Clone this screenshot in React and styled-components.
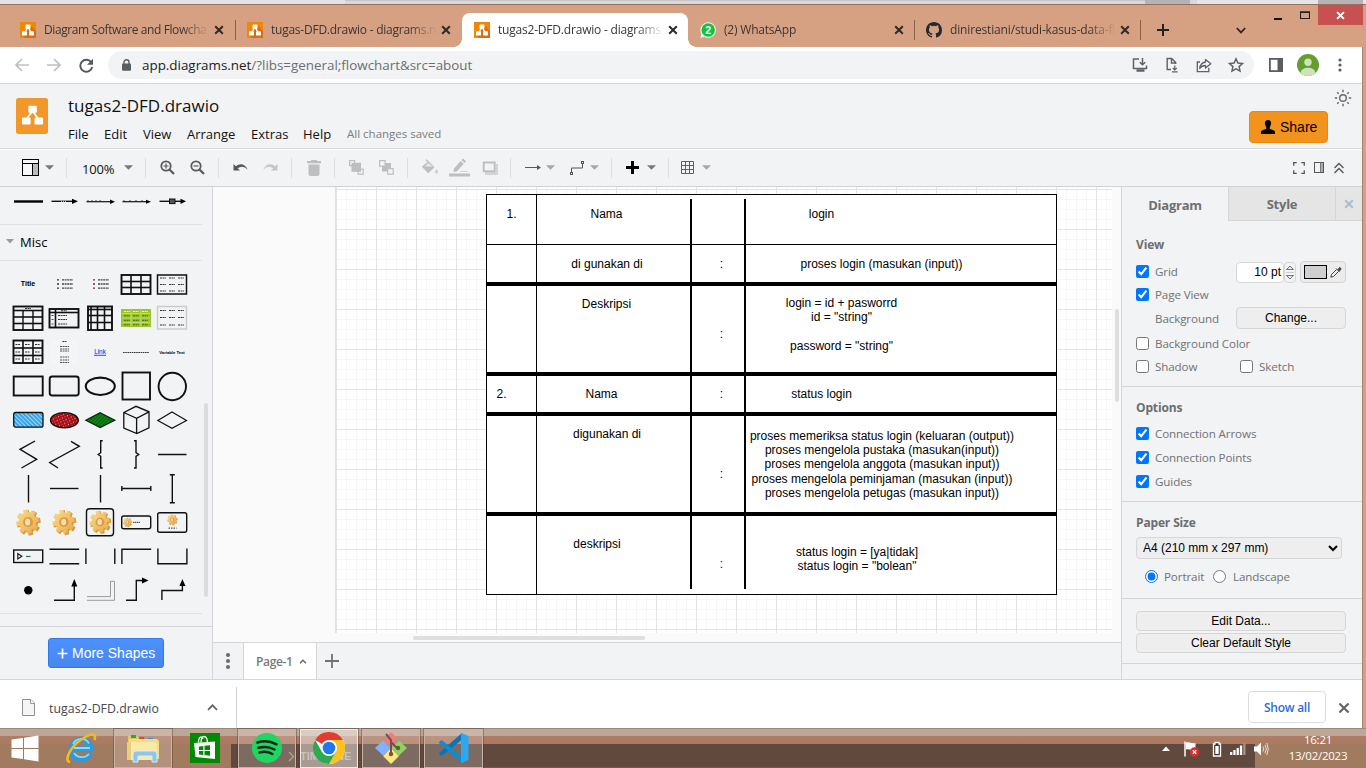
import React from 'react';
import styled, { createGlobalStyle, css } from 'styled-components';

const Global = createGlobalStyle`
  * { box-sizing: border-box; }
  body { margin: 0; overflow: hidden; font-family: "Open Sans", "Noto Sans", sans-serif; }
  svg { display: block; flex: none; }
`;

const Screen = styled.div`
  width: 1366px; height: 768px; display: flex; flex-direction: column;
  background: #d6a182; overflow: hidden;
`;
const Behind = styled.div`
  height: 5px; display: flex; background: #d7d7d9; border-bottom: 1px solid #94705d; flex: none;
`;
const BehindPart = styled.div`
  width: ${p => p.$w}px; background: ${p => p.$c}; border-top: ${p => (p.$line ? '1px solid #c6c6c8' : '0')};
`;

/* ---------- browser tabs ---------- */
const TabStrip = styled.div`
  height: 42px; flex: none; display: flex; padding: 8px 0 0 8px; background: #d6a182;
`;
const Tab = styled.div`
  width: ${p => p.$w}px; height: 34px; display: flex; align-items: center; padding-left: 12px;
  position: relative; color: #3c3533; border-radius: 8px 8px 0 0;
  ${p => p.$active && css`
    background: #fff;
    &::before, &::after {
      content: ''; position: absolute; bottom: 0; width: 8px; height: 8px;
    }
    &::before { left: -8px; background: radial-gradient(circle at 0 0, transparent 7.5px, #fff 8px); }
    &::after { right: -8px; background: radial-gradient(circle at 100% 0, transparent 7.5px, #fff 8px); }
  `}
`;
const TabTitle = styled.div`
  width: 166px; margin-left: 8px; margin-right: 4px; font-size: 12px; white-space: nowrap;
  letter-spacing: ${p => p.$ls}px; line-height: 18px;
  mask-image: linear-gradient(90deg, #000 138px, transparent 166px);
`;
const TabDivider = styled.div`
  width: 1px; height: 20px; margin: 7px -1px 0 0; background: #8a5f49;
`;
const StripIcon = styled.div`
  margin-left: ${p => p.$ml}px; height: 34px; display: flex; align-items: center;
`;
const WindowControls = styled.div`
  display: flex; margin-left: auto; margin-top: -8px; height: 20px; padding-right: 3px; align-items: center;
`;
const WinBtn = styled.div`
  width: ${p => p.$w}px; height: 20px; display: flex; align-items: center; justify-content: center;
  background: ${p => p.$bg || 'transparent'};
`;

/* ---------- window body ---------- */
const WindowBody = styled.div`
  height: 681px; flex: none; width: 1363px; border-right: 1px solid #ab8069; background: #fff;
  display: flex; flex-direction: column;
`;
const AddressRow = styled.div`
  height: 37px; flex: none; display: flex; align-items: center; padding-left: 13px;
  border-bottom: 1px solid #d4d6d9; background: #fff;
`;
const NavIcon = styled.div`
  width: 18px; margin-right: 14px; display: flex; justify-content: center;
`;
const Pill = styled.div`
  width: 1146px; height: 28px; border-radius: 14px; background: #f1f3f4; display: flex; align-items: center;
  padding: 0 9px 0 11px; margin-left: -1px;
`;
const Url = styled.div`
  margin-left: 11px; flex: 1; font-size: 13.4px; letter-spacing: 0; color: #6b6f73; line-height: 20px;
  b { font-weight: 400; color: #202124; }
`;
const PillIcons = styled.div`
  display: flex; gap: 14px;
`;
const RightNav = styled.div`
  display: flex; align-items: center; margin-left: 15px;
`;
const Gap = styled.div`
  width: ${p => p.$w}px; height: ${p => p.$h || 0}px; flex: none;
`;

/* ---------- app header ---------- */
const AppHeader = styled.div`
  height: 66px; flex: none; display: flex; background: #f1f3f4; border-bottom: 1px solid #fff;
  box-shadow: inset 0 -1px #d4d6d9; padding: 14px 18px 0 16px; align-items: flex-start;
`;
const Titles = styled.div`
  margin-left: 20px; flex: 1;
`;
const FileTitle = styled.div`
  font-size: 17px; line-height: 22px; margin-top: -3px; color: #111; letter-spacing: 0.03px;
`;
const Menu = styled.div`
  display: flex; margin-top: 7px; font-size: 13px; line-height: 20px; color: #111;
`;
const MenuItem = styled.div`
  width: ${p => p.$w}px; white-space: nowrap;
`;
const Saved = styled.div`
  color: #7b7e80; font-size: 11.5px; letter-spacing: 0; 
`;
const ShareButton = styled.div`
  width: 79px; height: 32px; margin-top: 13px; border: 1px solid #f08705; border-radius: 4px; background: #f2931e;
  display: flex; align-items: center; padding-left: 11px; font: 14px "Liberation Sans", Arial, sans-serif; color: #000;
  gap: 5px;
`;
const SunBox = styled.div`
  margin: -9px -8px 0 6px;
`;

/* ---------- toolbar ---------- */
const Toolbar = styled.div`
  height: 37px; flex: none; display: flex; align-items: center; background: #f1f3f4;
  border-bottom: 1px solid #d0d2d4; padding: 0 17px 1px 0;
`;
const Tool = styled.div`
  width: ${p => p.$w}px; margin-left: ${p => p.$ml}px; display: flex; justify-content: center; flex: none;
`;
const Sep = styled.div`
  width: 1px; height: 20px; background: #dcdee0; margin-left: ${p => p.$ml}px; flex: none;
`;
const Zoom = styled.div`
  margin-left: 15px; width: 34px; font-size: 13px; color: #111; letter-spacing: -0.2px; padding-top: 3px; line-height: 20px;
`;
const RightTools = styled.div`
  margin-left: auto; display: flex; gap: 9px; align-items: center;
`;

/* ---------- main ---------- */
const Main = styled.div`
  height: 493px; flex: none; display: flex; border-bottom: 1px solid #d4d6d9; background: #f1f3f4;
`;
const Sidebar = styled.div`
  width: 213px; border-right: 1px solid #d4d6d9; display: flex; flex-direction: column; flex: none;
`;
const Palette = styled.div`
  height: 440px; border-bottom: 1px solid #d4d6d9; display: flex; justify-content: space-between;
`;
const PaletteList = styled.div`
  width: 202px;
`;
const ShapeRow = styled.div`
  display: grid; grid-template-columns: repeat(5, 36px); grid-auto-rows: 34px; padding: ${p => p.$pad};
  border-bottom: 1px solid #dfe1e3;
`;
const SectionHead = styled.div`
  height: 36px; display: flex; align-items: center; border-bottom: 1px solid #dfe1e3; padding: 0 0 2px 6px; gap: 6px;
  font-size: 13px; color: #000;
`;
const SideScroll = styled.div`
  width: 4px; height: 194px; margin: 216px 4px 0 0; border-radius: 2px; background: #d9dbdd;
`;
const SideFooter = styled.div`
  flex: 1; padding: 11px 0 0 48px;
`;
const MoreShapes = styled.div`
  width: 116px; height: 30px; border: 1px solid #3079ed; border-radius: 3px;
  background: linear-gradient(#4d90fe, #4787ed); color: #fff; font: 14px "Liberation Sans", Arial, sans-serif;
  display: flex; align-items: center; padding-left: 8px; gap: 4px; white-space: nowrap;
`;

const Center = styled.div`
  width: 908px; display: flex; flex-direction: column; flex: none;
`;
const Canvas = styled.div`
  position: relative; height: 455px; background: #fafafa; flex: none; overflow: hidden;
`;
const Paper = styled.div`
  position: absolute; left: 122px; top: 0; width: 777px; height: 446px; border-left: 1px solid #e0e0e0;
  background-color: #fff;
  background-image:
    linear-gradient(90deg, #e4e4e4 1px, transparent 1px), linear-gradient(#e4e4e4 1px, transparent 1px),
    linear-gradient(90deg, #f6f6f6 1px, transparent 1px), linear-gradient(#f6f6f6 1px, transparent 1px);
  background-size: 40px 40px, 40px 40px, 10px 10px, 10px 10px;
  background-position: 40px 0, 0 2px, 10px 0, 0 2px;
`;
const Lines = styled.svg`
  position: absolute; left: 273px; top: 7px;
`;
const Label = styled.div`
  position: absolute; left: ${p => p.$x - 213}px; top: ${p => p.$y - 187}px; transform: translate(-50%, -50%);
  font: 12px/14.4px "Liberation Sans", Arial, sans-serif; color: #000; text-align: center; white-space: pre;
`;
const Thumb = styled.div`
  position: absolute; left: ${p => p.$x}px; top: ${p => p.$y}px; width: ${p => p.$w}px; height: ${p => p.$h}px;
  border-radius: 2px; background: #dedede;
`;
const PageTabs = styled.div`
  flex: 1; border-top: 1px solid #d4d6d9; display: flex; align-items: center; color: #707070;
`;
const PageMenu = styled.div`
  width: 31px; height: 100%; border-right: 1px solid #d4d6d9; display: flex; align-items: center; justify-content: center;
`;
const PageTab = styled.div`
  width: 73px; height: 100%; background: #fff; border-right: 1px solid #d4d6d9; display: flex; align-items: center;
  padding-left: 12px; gap: 6px; font-size: 12px; font-weight: 600; letter-spacing: -0.35px; color: #77797b;
`;
const AddPage = styled.div`
  margin-left: 8px;
`;

/* ---------- format panel ---------- */
const Panel = styled.div`
  flex: 1; border-left: 1px solid #d4d6d9; display: flex; flex-direction: column; font-size: 11.6px; color: #707274;
`;
const PanelTabs = styled.div`
  height: 34px; display: flex; flex: none; font-size: 13px; font-weight: 700; color: #707070;
`;
const PanelTab = styled.div`
  width: ${p => p.$w}px; display: flex; align-items: center; justify-content: center; letter-spacing: -0.25px;
  padding-top: ${p => (p.$off ? 0 : 2)}px;
  ${p => p.$off && css`background: #e5e5e5; border-left: 1px solid #d4d6d9; border-bottom: 1px solid #d4d6d9;`}
`;
const Section = styled.div`
  height: ${p => p.$h}px; flex: none; border-bottom: 1px solid #d4d6d9; padding: ${p => p.$pt}px 16px 0 14px;
`;
const Heading = styled.div`
  height: 20px; line-height: 20px; font-weight: 700; font-size: 12px; letter-spacing: -0.15px; color: #6c6e70;
`;
const Row = styled.div`
  height: ${p => p.$h || 24}px; display: flex; align-items: center; white-space: nowrap;
  input { width: 13px; height: 13px; margin: 0; flex: none; }
`;
const Option = styled.label`
  display: flex; align-items: center; gap: ${p => p.$gap || 6}px; line-height: 16px; letter-spacing: -0.1px;
  width: ${p => (p.$w ? p.$w + 'px' : 'auto')}; padding-left: ${p => p.$pl || 0}px;
  margin-top: -1px;
  span { padding-top: 1px; }
`;
const NumberBox = styled.div`
  width: 48px; height: 21px; border: 1px solid #d6d6d6; border-radius: 4px; background: #fff; color: #000;
  font: 12px/19px "Liberation Sans", Arial, sans-serif; text-align: right; padding-right: 2px;
`;
const Stepper = styled.div`
  width: 12px; height: 21px; border: 1px solid #d6d6d6; border-radius: 4px; display: flex; align-items: center;
  justify-content: center; margin-right: 4px;
`;
const ColorBtn = styled.div`
  width: 46px; height: 22px; border: 1px solid #d3d3d3; border-radius: 4px; background: #ececec; display: flex;
  align-items: center; padding-left: 3px; gap: 3px;
`;
const Swatch = styled.div`
  width: 23px; height: 14px; border: 1px solid #000; background: #cfcfcf;
`;
const PanelButton = styled.div`
  height: ${p => p.$h}px; width: ${p => p.$w}px; border: 1px solid #d6d6d6; border-radius: 4px; background: #eee;
  color: #000; font: 12px "Liberation Sans", Arial, sans-serif; display: flex; align-items: center;
  justify-content: center; margin-bottom: 2px;
`;
const PaperSelect = styled.select`
  display: block; width: 206px; height: 22px; margin-top: 4px; border: 1px solid #d6d6d6; border-radius: 4px;
  background: #eee; color: #000; font: 12px "Liberation Sans", Arial, sans-serif; padding: 0 0 0 2px;
`;

/* ---------- downloads ---------- */
const Downloads = styled.div`
  height: 48px; flex: none; display: flex; align-items: center; background: #fff; padding: 7px 12px 0 22px;
`;
const FileName = styled.div`
  font-size: 12.3px; color: #45484b; width: 158px; margin-left: 14px; letter-spacing: 0.05px; padding-top: 1px;
`;
const DownloadDivider = styled.div`
  width: 1px; height: 42px; background: #d0d0d0; margin-left: 18px;
`;
const ShowAll = styled.div`
  margin-left: auto; margin-right: 12px; margin-top: -1px; width: 78px; height: 32px; border: 1px solid #dadce0; border-radius: 4px;
  display: flex; align-items: center; justify-content: center; font-size: 12px; font-weight: 600; color: #2b6ddd;
  letter-spacing: -0.25px;
`;

/* ---------- taskbar ---------- */
const Taskbar = styled.div`
  height: 40px; flex: none; display: flex; align-items: center; position: relative;
  background:
    linear-gradient(#9b8778 1px, transparent 1px),
    linear-gradient(transparent 39px, #4a667e 39px) 231px 0 / 1024px 40px no-repeat,
    linear-gradient(transparent 16px, #614a3d 16px) 231px 0 / 1024px 40px no-repeat,
    linear-gradient(#bba796 8px, #b07c64 8px, #a97a61 16px, #a17b60 16px);
`;
const BehindText = styled.div`
  position: absolute; left: 288px; top: 17px; font: bold 11px/22px "Liberation Sans", Arial, sans-serif; color: #a49081;
  display: flex; gap: 2px; align-items: center;
`;
const TaskItem = styled.div`
  width: ${p => p.$w}px; height: 39px; margin-left: ${p => p.$ml}px; display: flex; align-items: center;
  justify-content: center; position: relative;
  ${p => p.$open && css`border: 1px solid #c8b5a9; background: rgba(255,255,255,.18); box-shadow: 0 0 0 1px rgba(70,45,35,.35);`}
  ${p => p.$current && css`border-color: #f0e9e4; background: rgba(255,255,255,.45);`}
`;
const Tray = styled.div`
  margin-left: auto; display: flex; align-items: center; padding-top: 2px;
`;
const Clock = styled.div`
  width: 62px; margin: -2px 17px 0 18px; text-align: center; font-size: 11.5px; line-height: 16px; color: #fff;
  letter-spacing: -0.25px; white-space: nowrap;
`;

const DrawioMark = ({ w, h }) => (
  <svg width={w} height={h} viewBox={w === 16 ? '0 0 16 16' : '0 0 32 36'}>
    {w === 16 ? (
      <>
        <rect width="16" height="16" fill="#f08705" />
        <path d="M10 3l6 6v7H5l-2-3z" fill="#df6c0c" />
        <path d="M8 5L4.5 11M8 5l3.5 6" stroke="#fff" strokeWidth="1.4" />
        <rect x="5.5" y="2.4" width="5" height="4.3" rx=".7" fill="#fff" />
        <rect x="2" y="9.3" width="5" height="4.3" rx=".7" fill="#fff" />
        <rect x="9" y="9.3" width="5" height="4.3" rx=".7" fill="#fff" />
      </>
    ) : (
      <>
        <rect width="32" height="36" rx="2.5" fill="#f2982a" />
        <path d="M16.5 13L10.5 21M16.5 13l6 8" stroke="#fff" strokeWidth="1.7" />
        <rect x="12.3" y="7.7" width="8.6" height="7" rx="1.3" fill="#fff" />
        <rect x="6" y="19.6" width="8.6" height="7" rx="1.3" fill="#fff" />
        <rect x="18.5" y="19.6" width="8.6" height="7" rx="1.3" fill="#fff" />
      </>
    )}
  </svg>
);
const Close = ({ s = 10, c = '#2c2a2a', sw = 2 }) => (
  <svg width={s} height={s} viewBox="0 0 10 10"><path d="M1.2 1.2l7.6 7.6M8.8 1.2L1.2 8.8" stroke={c} strokeWidth={sw} /></svg>
);
const WhatsApp = () => (
  <svg width="16" height="16" viewBox="0 0 16 16">
    <path d="M.3 15.8l1-3.9A7.8 7.8 0 1 1 4.500 15z" fill="#e8f5e4" />
    <circle cx="8.200" cy="8" r="6.700" fill="#12c143" />
    <text x="8.200" y="11.700" fontSize="10.500" fontWeight="700" fill="#fff" textAnchor="middle" fontFamily="Liberation Sans">2</text>
  </svg>
);
const GitHub = () => (
  <svg width="16" height="16" viewBox="0 0 16 16" fill="#24292f">
    <path d="M8 0C3.58 0 0 3.58 0 8c0 3.54 2.29 6.53 5.47 7.59.4.07.55-.17.55-.38 0-.19-.01-.82-.01-1.49-2.01.37-2.53-.49-2.69-.94-.09-.23-.48-.94-.82-1.13-.28-.15-.68-.52-.01-.53.63-.01 1.08.58 1.23.82.72 1.21 1.87.87 2.33.66.07-.52.28-.87.51-1.07-1.78-.2-3.64-.89-3.64-3.95 0-.87.31-1.59.82-2.15-.08-.2-.36-1.02.08-2.12 0 0 .67-.21 2.2.82a7.6 7.6 0 0 1 4 0c1.53-1.04 2.2-.82 2.2-.82.44 1.1.16 1.92.08 2.12.51.56.82 1.27.82 2.15 0 3.07-1.87 3.75-3.65 3.95.29.25.54.73.54 1.48 0 1.07-.01 1.93-.01 2.2 0 .21.15.46.55.38A8 8 0 0 0 16 8c0-4.42-3.58-8-8-8z" />
  </svg>
);
const Caret = ({ c = '#8b8d8f' }) => (
  <svg width="9" height="5" viewBox="0 0 9 5"><path d="M0 .3h9L4.5 4.8z" fill={c} /></svg>
);
const Dots = ({ c, r = 1.6, step = 5 }) => (
  <svg width="6" height="18" viewBox="0 0 6 18" fill={c}>
    <circle cx="3" cy={9 - step} r={r} /><circle cx="3" cy="9" r={r} /><circle cx="3" cy={9 + step} r={r} />
  </svg>
);

const TABS = [
  { w: 227, t: 'Diagram Software and Flowcha', icon: 'd', ls: -0.4 },
  { w: 227, t: 'tugas-DFD.drawio - diagrams.n', icon: 'd', div: true, ls: -0.24 },
  { w: 226, t: 'tugas2-DFD.drawio - diagrams', icon: 'd', active: true, ls: -0.2 },
  { w: 226, t: '(2) WhatsApp', icon: 'w', ls: -0.2 },
  { w: 226, t: 'dinirestiani/studi-kasus-data-fl', icon: 'g', div: true, ls: -0.15 },
];

/* ---------- palette thumbnails, each drawn in a 36 x 34 cell ---------- */
const gearPath = (cx, cy, R) => {
  const pts = [];
  const teeth = 8;
  for (let i = 0; i < teeth; i++) {
    const a = (i / teeth) * Math.PI * 2 - 0.2;
    [[-0.27, 0.76], [-0.19, 1], [0.19, 1], [0.27, 0.76]].forEach(([d, k]) => {
      pts.push(`${(cx + Math.cos(a + d) * R * k * 0.93).toFixed(2)} ${(cy + Math.sin(a + d) * R * k).toFixed(2)}`);
    });
  }
  return `M${pts.join('L')}Z`;
};
const Gear = ({ x = 18, y = 17, r = 13 }) => (
  <g>
    <path d={gearPath(x + r * 0.06, y + r * 0.05, r)} fill="#d9983c" />
    <path d={gearPath(x - r * 0.04, y - r * 0.03, r * 0.95)} fill="url(#gold)" />
    <circle cx={x} cy={y} r={r * 0.38} fill="#dc9a44" />
    <ellipse cx={x - r * 0.03} cy={y} rx={r * 0.2} ry={r * 0.26} fill="#f3dfae" />
  </g>
);
const Frame = ({ x, y, w, h, cols = [], rows = [], c = '#111', sw = 1.9 }) => (
  <g stroke={c} strokeWidth={sw} fill="none">
    <rect x={x} y={y} width={w} height={h} />
    {cols.map(v => <path key={'c' + v} strokeWidth={sw - 0.3} d={`M${v} ${y}V${y + h}`} />)}
    {rows.map(v => <path key={'r' + v} strokeWidth={sw - 0.3} d={`M${x} ${v}H${x + w}`} />)}
  </g>
);
const Dashes = ({ xs, ys, w = 6, c = '#333', sw = 1 }) => (
  <g stroke={c} strokeWidth={sw} strokeDasharray="2 .6">
    {ys.flatMap(y => xs.map(x => <path key={x + '-' + y} d={`M${x} ${y}h${w}`} />))}
  </g>
);
const S = { stroke: '#111', strokeWidth: 1.4, fill: 'none' };
const SHAPES = [
  <text x="18" y="19.4" fontSize="7" fontWeight="700" textAnchor="middle" fontFamily="Liberation Sans">Title</text>,
  <g><Dashes xs={[11]} ys={[12.8, 17, 21.2]} w={2} sw={1.3} c="#333" /><Dashes xs={[16]} ys={[12.8, 17, 21.2]} w={11} sw={1.3} c="#444" /></g>,
  <g><Dashes xs={[11]} ys={[12.8, 17, 21.2]} w={2} sw={1.3} c="#723" /><Dashes xs={[16]} ys={[12.8, 17, 21.2]} w={11} sw={1.3} c="#444" /></g>,
  <Frame x={3.5} y={8} w={29} h={19} cols={[13, 23]} rows={[14.5, 20.5]} />,
  <g><Frame x={3.5} y={8} w={29} h={19} sw={1.5} /><Dashes xs={[6, 15, 24]} ys={[11, 17.5, 24]} /></g>,
  <g><Frame x={3.5} y={5.5} w={29} h={23.5} rows={[9.5, 16, 22.5]} /><path d="M13 9.5V29M23 9.5V29" {...S} /><Dashes xs={[15]} ys={[7.5]} /></g>,
  <g><Frame x={3.5} y={8} w={29} h={18.500} rows={[11.5]} cols={[9.5]} /><Dashes xs={[15]} ys={[9.800]} w={6} /><Dashes xs={[12]} ys={[14.5, 18.5, 23]} w={9} sw={1.200} /><Dashes xs={[5.5]} ys={[14.5, 18.5, 23]} w={2} c="#733" /></g>,
  <g><Frame x={6} y={5.5} w={24} h={23.5} rows={[8.5, 14.5, 21.5]} cols={[9, 15.5, 22.5]} /></g>,
  <g><rect x="3" y="8" width="30" height="18" fill="#9bc52b" /><path d="M4 12.5h28M4 17h28M4 21.5h28M13 9v16M23 9v16" stroke="#c5e07c" strokeWidth=".8" /><Dashes xs={[6, 15, 24]} ys={[14.8, 19.3, 23.8]} c="#4c6610" /><Dashes xs={[6, 15, 24]} ys={[10.5]} c="#e9f5c8" /></g>,
  <g><Frame x={3.5} y={5.5} w={29} h={22.5} c="#c9cbcd" sw={1.5} /><Dashes xs={[6, 15, 24]} ys={[9.5, 16.5, 24]} /></g>,
  <g><Frame x={3.5} y={5.5} w={29} h={22.5} cols={[13, 23]} rows={[13, 20.5]} /><Dashes xs={[5.5, 15, 25]} ys={[9.5, 17, 24]} w={5} /></g>,
  <g><rect x="4.5" y="5" width="27" height="24" fill="#f3f5f6" /><Dashes xs={[16.5]} ys={[6.5]} w={4} /><Dashes xs={[14]} ys={[11.5, 14, 16, 22, 25, 27.5]} w={9} c="#555" /></g>,
  <g><text x="18" y="19" fontSize="6.4" textAnchor="middle" fontFamily="Liberation Sans" fill="#1212ee">Link</text><path d="M12 20.3h12" stroke="#1212ee" strokeWidth=".8" /></g>,
  <path d="M5 17.5h26" stroke="#333" strokeWidth="1" strokeDasharray="1.6 .6" />,
  <text x="18" y="18.600" fontSize="4.200" fontWeight="700" textAnchor="middle" fontFamily="Liberation Sans">Variable Text</text>,
  <rect x="3.7" y="7.5" width="29" height="19" {...S} strokeWidth="1.9" />,
  <rect x="3.7" y="7.5" width="29" height="19" rx="2.5" {...S} strokeWidth="1.9" />,
  <ellipse cx="18.3" cy="17.3" rx="14.5" ry="8.7" {...S} strokeWidth="2.1" />,
  <rect x="4.500" y="3.500" width="27.500" height="27" {...S} strokeWidth="1.900" />,
  <circle cx="18.3" cy="17.5" r="13.7" {...S} strokeWidth="1.900" />,
  <rect x="3.7" y="9.5" width="29.3" height="14.7" rx="2" fill="url(#hatchB)" stroke="#111" strokeWidth="1.3" />,
  <ellipse cx="18.4" cy="17.2" rx="13.9" ry="7.6" fill="url(#speck)" stroke="#111" strokeWidth="1.3" />,
  <path d="M18.2 9.8L32.8 17.3 18.2 24.6 3.8 17.3z" fill="url(#hatchG)" stroke="#0c1d0c" strokeWidth="1.2" />,
  <path d="M5.8 9.5L18 3.3l13 5.5v16L18.8 30.5 5.8 25zM5.8 9.5l12.8 5.8L31 8.8M18.6 15.3v15" {...S} strokeWidth="1.3" />,
  <path d="M18 9l14.5 8.5L18 25.3 3.8 17.5z" {...S} strokeWidth="1.2" />,
  <path d="M25 4L10 12.3 26.7 22.3 11.5 31" {...S} />,
  <path d="M25 4.3L33.3 9.3 3.7 25.5 12 31" {...S} />,
  <path d="M20.7 3.7h-2v12l-2.5 1.8 2.5 1.8v11.7h2" {...S} />,
  <path d="M16 3.7h2v12l2.7 1.8-2.7 1.8v11.7h-2" {...S} />,
  <path d="M4 17.5h28.5" {...S} strokeWidth="1.5" />,
  <path d="M18.5 4v27.5" {...S} />,
  <path d="M4 17.5h28.5" {...S} />,
  <path d="M18.5 4v27.5" {...S} />,
  <path d="M3.8 17.5h29M3.8 15v5M32.8 15v5" {...S} />,
  <path d="M18.3 3.7v28M15.8 3.7h5M15.8 31.7h5" {...S} />,
  <Gear />,
  <Gear r={12.6} />,
  <g><rect x="4.5" y="3.7" width="27" height="27" rx="3" {...S} /><Gear r={11.5} /></g>,
  <g><rect x="3.7" y="11" width="29" height="12.8" rx="2" {...S} /><Gear x={9.5} y={17.3} r={4.8} /><path d="M15 17.3h7" stroke="#555" strokeWidth="1.2" strokeDasharray="1.5 .5" /></g>,
  <g><rect x="3.7" y="7.7" width="29" height="19.5" rx="2" {...S} /><Gear x={18.3} y={14.7} r={5.5} /><path d="M14.5 23.2h8" stroke="#456" strokeWidth="1.3" strokeDasharray="1.5 1" /></g>,
  <g><rect x="3.7" y="11" width="29" height="12.5" {...S} /><path d="M7.8 14.5v5.5l4-2.7z" {...S} strokeWidth="1.1" /><path d="M16 17.5h4.5" stroke="#465" strokeWidth="1.2" /></g>,
  <path d="M3.5 10.3h29.7M3.5 24.7h29.7" {...S} />,
  <path d="M3.9 9.5v15.5M32.8 9.5v15.5" {...S} />,
  <path d="M3.9 25V10.2h29.3" {...S} />,
  <path d="M3.9 9.5v15.2h29V9.5" {...S} />,
  <circle cx="18.3" cy="17.2" r="4.2" fill="#000" />,
  <g><path d="M8 27.3h20.3V10" {...S} /><path d="M28.3 6l3 7.5h-6z" fill="#000" /></g>,
  <path d="M5 23.6h23.5V8.3h4v19H5" stroke="#8f9193" strokeWidth=".9" fill="none" />,
  <g><path d="M8 27.3h10.3V7.5h8" {...S} /><path d="M30.500 7.500l-6.500-3v6z" fill="#000" /></g>,
  <g><path d="M7.9 27V17.5h20.5V11" {...S} /><path d="M28.400 6l3 7h-6z" fill="#000" /></g>,
];
const TOP_LINES = [
  <path d="M4 17.5h29" stroke="#000" strokeWidth="2.4" />,
  <g><path d="M5.5 17.3h22" {...S} /><path d="M32 17.3l-6-2.6v5.2z" /><path d="M15 17.3h5" stroke="#cfd8d8" strokeWidth="1" strokeDasharray="1 1" /></g>,
  <g><path d="M4.5 17.7h24" {...S} strokeWidth="1.2" /><path d="M33 17.7l-5-2.2v4.4z" /><path d="M5 16.5h14" stroke="#999" strokeWidth="1" strokeDasharray="2 2" /></g>,
  <g><path d="M4.5 17.7h24" {...S} strokeWidth="1.2" /><path d="M33 17.7l-5-2v4z" /><path d="M5 16.5h22" stroke="#999" strokeWidth="1" strokeDasharray="2 4" /></g>,
  <g><path d="M5.5 17.3h22" {...S} /><path d="M32 17.3l-5.5-2.6v5.2z" /><rect x="15.5" y="15" width="5.5" height="4.6" fill="#555" stroke="#111" /></g>,
];
const Cell = ({ children }) => <svg width="36" height="34" viewBox="0 0 36 34">{children}</svg>;

const LABELS = [
  [511.5, 214, '1.'], [606.5, 214, 'Nama'], [821.5, 214, 'login'],
  [607, 264, 'di gunakan di'], [721.5, 264, ':'], [881.5, 264, 'proses login (masukan (input))'],
  [606.5, 304, 'Deskripsi'], [721.5, 334, ':'], [841.5, 324.5, 'login = id + pasworrd\nid = "string"\n\npassword = "string"'],
  [501.5, 394, '2.'], [601.5, 394, 'Nama'], [721.5, 394, ':'], [821.5, 394, 'status login'],
  [607, 434, 'digunakan di'], [721.5, 474, ':'],
  [882, 464.5, 'proses memeriksa status login (keluaran (output))\nproses mengelola pustaka (masukan(input))\nproses mengelola anggota (masukan input))\nproses mengelola peminjaman (masukan (input))\nproses mengelola petugas (masukan input))'],
  [597, 544, 'deskripsi'], [721.5, 564, ':'], [857, 559, 'status login = [ya|tidak]\nstatus login = "bolean"'],
];
const MENU = [['File', 36], ['Edit', 39], ['View', 44], ['Arrange', 64], ['Extras', 52], ['Help', 44]];

export default function App() {
  return (
    <Screen>
      <Global />
      <Behind>
        <BehindPart $w={345} $c="#e3e3e5" />
        <BehindPart $w={800} $c="#d9d9db" $line />
        <BehindPart $w={45} $c="#b5b3b4" />
        <BehindPart $w={7} $c="#d9d9db" />
        <BehindPart $w={121} $c="#e6e6e8" />
        <BehindPart $w={45} $c="#b5b3b4" />
        <BehindPart $w={3} $c="#e6e6e8" />
      </Behind>

      <TabStrip>
        {TABS.map(t => (
          <React.Fragment key={t.t}>
            {t.div && <TabDivider />}
            <Tab $w={t.w} $active={t.active}>
              {t.icon === 'd' && <DrawioMark w={16} h={16} />}
              {t.icon === 'w' && <WhatsApp />}
              {t.icon === 'g' && <GitHub />}
              <TabTitle $ls={t.ls}>{t.t}</TabTitle>
              <Close />
            </Tab>
          </React.Fragment>
        ))}
        <TabDivider />
        <StripIcon $ml={17}><svg width="12" height="12" viewBox="0 0 12 12"><path d="M6 0v12M0 6h12" stroke="#222" strokeWidth="2" /></svg></StripIcon>
        <StripIcon $ml={67}><svg width="10" height="7" viewBox="0 0 10 7"><path d="M.8 1L5 5.4 9.2 1" stroke="#2b2523" strokeWidth="1.8" fill="none" /></svg></StripIcon>
        <WindowControls>
          <WinBtn $w={27}><svg width="8" height="12" viewBox="0 0 8 12"><path d="M0 10h8" stroke="#111" strokeWidth="2" /></svg></WinBtn>
          <WinBtn $w={27}><svg width="10" height="8" viewBox="0 0 10 8"><path d="M.5 1.5h9v6h-9zM0 .9h10" stroke="#222" fill="none" strokeWidth="1.2" /></svg></WinBtn>
          <WinBtn $w={45} $bg="#c75050"><Close s={9} c="#fff" sw={2.2} /></WinBtn>
        </WindowControls>
      </TabStrip>

      <WindowBody>
        <AddressRow>
          <NavIcon><svg width="14" height="14" viewBox="0 0 14 14"><path d="M14 7H1.5M7 1L1 7l6 6" stroke="#bdc0c3" strokeWidth="1.7" fill="none" /></svg></NavIcon>
          <NavIcon><svg width="14" height="14" viewBox="0 0 14 14"><path d="M0 7h12.5M7 1l6 6-6 6" stroke="#bdc0c3" strokeWidth="1.7" fill="none" /></svg></NavIcon>
          <NavIcon><svg width="15" height="15" viewBox="0 0 15 15"><path d="M12.2 4.2A6 6 0 1 0 13.2 9" stroke="#54585c" strokeWidth="1.9" fill="none" /><path d="M14 .7v6H8z" fill="#54585c" /></svg></NavIcon>
          <Pill>
            <Gap $w={3} />
            <svg width="9" height="12" viewBox="0 0 9 12"><rect y="4.5" width="9" height="7.3" rx="1" fill="#5a5e62" /><path d="M2 5V3.2a2.5 2.5 0 0 1 5 0V5" stroke="#5a5e62" strokeWidth="1.4" fill="none" /></svg>
            <Url><b>app.diagrams.net</b>/?libs=general;flowchart&amp;src=about</Url>
            <PillIcons>
              <svg width="18" height="18" viewBox="0 0 18 18" fill="none" stroke="#5f6368" strokeWidth="1.5"><path d="M8 3H2.5v9.5h13v-3M11.5 2v6.5M8.8 6.2l2.7 2.6 2.7-2.6" /><path d="M5.5 14.5h8" strokeWidth="2.5" /></svg>
              <svg width="18" height="18" viewBox="0 0 18 18" fill="none" stroke="#5f6368" strokeWidth="1.4"><path d="M8 13.500H4.200v-11h4.500l4 4V8M8.500 2.500V7H13" /><path d="M11.800 9.500v4.500M9.800 12l2 2 2-2M9 15.800h5.600" strokeWidth="1.200" /></svg>
              <svg width="18" height="18" viewBox="0 0 18 18" fill="none" stroke="#5f6368" strokeWidth="1.3"><path d="M5 6H2.3v9.7h11.5v-4" /><path d="M10.500 3.500l5.300 4.300-5.300 4.200V9.500C7.500 9.500 6 10.500 4.700 12.500c.5-4 2.500-6 5.800-6.500z" strokeLinejoin="round" /></svg>
              <svg width="18" height="18" viewBox="0 0 18 18" fill="none" stroke="#5f6368" strokeWidth="1.5"><path d="M9 2.800l1.900 4.200 4.600.5-3.400 3.100.9 4.500L9 12.800l-4 2.300.9-4.500L2.500 7.500 7.100 7z" /></svg>
            </PillIcons>
          </Pill>
          <RightNav>
            <svg width="14" height="14" viewBox="0 0 14 14"><rect x=".9" y=".9" width="12.2" height="12.2" fill="none" stroke="#5a5e63" strokeWidth="1.8" /><rect x="8.5" y="1" width="4.5" height="12" fill="#5a5e63" /></svg>
            <Gap $w={14} />
            <svg width="22" height="22" viewBox="0 0 22 22"><defs><clipPath id="av"><circle cx="11" cy="11" r="11" /></clipPath></defs><g clipPath="url(#av)"><rect width="22" height="22" fill="#639f2f" /><circle cx="11" cy="8.3" r="3.7" fill="#cfe2bd" /><ellipse cx="11" cy="18.5" rx="7.3" ry="4.7" fill="#cfe2bd" /></g></svg>
            <Gap $w={18} />
            <Dots c="#5a5e63" />
          </RightNav>
        </AddressRow>

        <AppHeader>
          <DrawioMark w={32} h={36} />
          <Titles>
            <FileTitle>tugas2-DFD.drawio</FileTitle>
            <Menu>
              {MENU.map(([t, w]) => <MenuItem key={t} $w={w}>{t}</MenuItem>)}
              <Saved>All changes saved</Saved>
            </Menu>
          </Titles>
          <ShareButton>
            <svg width="14" height="14" viewBox="0 0 14 14"><path d="M7 0c2.3 0 3.3 1.7 3 3.8-.2 1.7-.8 2.7-1.3 3.4v1.6l4.3 1.7c.8.4 1 1 1 2V14H0v-1.500c0-1 .2-1.600 1-2l4.300-1.700V7.200C4.800 6.500 4.200 5.500 4 3.800 3.700 1.700 4.700 0 7 0z" /></svg>
            Share
          </ShareButton>
          <SunBox>
            <svg width="18" height="18" viewBox="0 0 18 18" fill="none" stroke="#65696c" strokeWidth="1.4"><circle cx="9" cy="9" r="3.3" /><path d="M9 .8v2.400M9 14.800v2.400M.8 9h2.400M14.800 9h2.400M3.200 3.200l1.500 1.500M13.300 13.300l1.500 1.500M14.800 3.200l-1.500 1.500M4.700 13.300l-1.500 1.500" /></svg>
          </SunBox>
        </AppHeader>

        <Toolbar>
          <Tool $ml={22} $w={17}><svg width="17" height="17" viewBox="0 0 17 17"><rect x=".5" y=".5" width="16" height="16" fill="#f6f7f8" stroke="#000" /><rect x="11" y="5" width="5" height="11" fill="#bbb" /><path d="M.5 4.5h16M10.5 4.5v12" stroke="#000" /></svg></Tool>
          <Tool $ml={6} $w={9}><Caret c="#77797b" /></Tool>
          <Sep $ml={12} />
          <Zoom>100%</Zoom>
          <Tool $ml={8} $w={9}><Caret c="#77797b" /></Tool>
          <Sep $ml={12} />
          {['M6.5 4v5M4 6.5h5', 'M4 6.5h5'].map(d => (
            <Tool key={d} $ml={12} $w={18}><svg width="15" height="15" viewBox="0 0 15 15" fill="none" stroke="#595c5f"><circle cx="6" cy="6" r="4.7" strokeWidth="1.8" /><path d="M9.500 9.500l4.500 4.500" strokeWidth="2.3" /><path d={d} transform="translate(-.5 -.5)" strokeWidth="1.2" /></svg></Tool>
          ))}
          <Sep $ml={12} />
          <Tool $ml={13} $w={18}><svg width="16" height="9" viewBox="0 0 16 9"><path d="M.5 1v6.500H7L4.700 5.200C8 2.800 11.500 3 14.800 7 12.500.5 6.500-.3 2.900 3.300z" fill="#55585b" /></svg></Tool>
          <Tool $ml={11} $w={18}><svg width="16" height="9" viewBox="0 0 16 9"><path d="M15.5 1v6.500H9l2.300-2.300C8 2.800 4.500 3 1.200 7 3.500.5 9.500-.3 13.100 3.300z" fill="#c3c5c7" /></svg></Tool>
          <Sep $ml={12} />
          <Tool $ml={13} $w={18}><svg width="14" height="16" viewBox="0 0 14 16" fill="#bcbec0"><path d="M0 1h4V0h6v1h4v2.200H0zM1.500 4.500h11V14a2 2 0 0 1-2 2h-7a2 2 0 0 1-2-2z" /></svg></Tool>
          <Sep $ml={11} />
          <Tool $ml={12} $w={18}><svg width="15" height="15" viewBox="0 0 15 15" fill="none" stroke="#bcbec0" strokeWidth="1.2"><rect x=".6" y=".6" width="5" height="5" /><rect x="9.2" y="9.2" width="5" height="5" fill="#f1f3f4" /><rect x="2.5" y="2.8" width="9.5" height="9" fill="#bcbec0" stroke="none" /></svg></Tool>
          <Tool $ml={12} $w={18}><svg width="15" height="15" viewBox="0 0 15 15" fill="none" stroke="#bcbec0" strokeWidth="1.2"><rect x="3" y="3" width="9" height="8.5" fill="#bcbec0" stroke="none" /><rect x=".6" y=".6" width="5.5" height="5.5" fill="#f1f3f4" /><rect x="8.7" y="8.7" width="5.5" height="5.5" fill="#f1f3f4" /></svg></Tool>
          <Sep $ml={12} />
          <Tool $ml={13} $w={18}><svg width="18" height="17" viewBox="0 0 18 17"><path d="M4.5 1l1-.8 8 8-6.300 6L.8 7.800 6.500 3z" fill="#bcbec0" /><path d="M4 7.500h7.500L7.200 4z" fill="#e9ebec" /><path d="M15.500 10c2 2.800 1.700 4.300 0 4.300s-2-1.500 0-4.300z" fill="#c9cbcd" /></svg></Tool>
          <Tool $ml={9} $w={22}><svg width="21" height="19" viewBox="0 0 21 19"><path d="M5 10.500L11.700 3l3 2.800-6.700 7.500-3.600.7zM12.500 2L14 .6l3 2.700L15.500 5z" fill="#bcbec0" /><path d="M11 13.500h8" stroke="#d3d5d7" /><rect x="0" y="15.5" width="21" height="3" fill="#bcbec0" /></svg></Tool>
          <Tool $ml={11} $w={18}><svg width="16" height="14" viewBox="0 0 16 14"><path d="M3 11h11V3h2v11H3z" fill="#d3d5d7" /><rect x="1.700" y="1.500" width="11" height="8.800" fill="#f1f3f4" stroke="#bcbec0" strokeWidth="1.900" /></svg></Tool>
          <Sep $ml={11} />
          <Tool $ml={13} $w={18}><svg width="16" height="6" viewBox="0 0 16 6"><path d="M0 2.500h13" stroke="#55585b" /><path d="M16 2.500l-4-2.500v5z" fill="#55585b" /></svg></Tool>
          <Tool $ml={4} $w={9}><Caret c="#a5a7a9" /></Tool>
          <Tool $ml={13} $w={18}><svg width="16" height="16" viewBox="0 0 16 16" fill="none" stroke="#55585b"><path d="M2.500 12.500v-4.500h11V3.500" /><rect x="1.500" y="12.500" width="2" height="2" /><rect x="12.500" y="1.500" width="2" height="2" /></svg></Tool>
          <Tool $ml={4} $w={9}><Caret c="#a5a7a9" /></Tool>
          <Sep $ml={12} />
          <Tool $ml={13} $w={14}><svg width="13" height="13" viewBox="0 0 13 13"><path d="M6.500 0v13M0 6.500h13" stroke="#000" strokeWidth="3" /></svg></Tool>
          <Tool $ml={8} $w={9}><Caret c="#77797b" /></Tool>
          <Sep $ml={12} />
          <Tool $ml={11} $w={14}><svg width="13" height="13" viewBox="0 0 13 13"><path d="M.5.5h12v12H.5zM.5 4.500h12M.5 8.500h12M4.500.5v12M8.500.5v12" stroke="#5e6164" fill="none" /></svg></Tool>
          <Tool $ml={8} $w={9}><Caret c="#a5a7a9" /></Tool>
          <RightTools>
            <svg width="12" height="12" viewBox="0 0 12 12"><path d="M.7 3.700V.7h3M8.300.7h3v3M11.300 8.300v3h-3M3.700 11.300h-3v-3" stroke="#55585b" strokeWidth="1.300" fill="none" /></svg>
            <svg width="10" height="11" viewBox="0 0 10 11"><rect x=".5" y=".5" width="9" height="10" fill="#f1f3f4" stroke="#55585b" /><rect x="6.500" y="1" width="2.500" height="9" fill="#aaa" /><path d="M6.500.5v10" stroke="#77797b" /></svg>
            <svg width="12" height="12" viewBox="0 0 12 12"><path d="M1.500 6L6 1.500 10.500 6M1.500 11L6 6.500l4.500 4.500" stroke="#55585b" strokeWidth="1.400" fill="none" /></svg>
          </RightTools>
        </Toolbar>

        <Main>
          <Sidebar>
            <Palette>
              <PaletteList>
                <svg width="0" height="0">
                  <defs>
                    <linearGradient id="gold" x1="0" y1="0" x2="1" y2="1"><stop offset="0" stopColor="#fcdc8c" /><stop offset="1" stopColor="#e9a848" /></linearGradient>
                    <pattern id="hatchB" width="3" height="3" patternUnits="userSpaceOnUse" patternTransform="rotate(-45)"><rect width="3" height="3" fill="#35a5ee" /><rect width="1" height="3" fill="#9fd6f8" /></pattern>
                    <pattern id="hatchG" width="2.5" height="2.5" patternUnits="userSpaceOnUse" patternTransform="rotate(45)"><rect width="2.5" height="2.5" fill="#0b8612" /><rect width=".8" height="2.5" fill="#0c5a10" /></pattern>
                    <pattern id="speck" width="4" height="4" patternUnits="userSpaceOnUse" patternTransform="rotate(20)"><rect width="4" height="4" fill="#a80d14" /><rect width="1" height="1.2" fill="#e9a5a8" /><rect x="2" y="2.300" width="1.200" height=".8" fill="#dd8488" /></pattern>
                  </defs>
                </svg>
                <ShapeRow $pad="0 0 3px 10px">{TOP_LINES.map((s, i) => <Cell key={i}><g transform="translate(0 -3)">{s}</g></Cell>)}</ShapeRow>
                <SectionHead>
                  <svg width="8" height="5" viewBox="0 0 8 5"><path d="M0 0h8L4 4.500z" fill="#999" /></svg>
                  Misc
                </SectionHead>
                <ShapeRow $pad="6px 0 6px 10px">{SHAPES.map((s, i) => <Cell key={i}>{s}</Cell>)}</ShapeRow>
              </PaletteList>
              <SideScroll />
            </Palette>
            <SideFooter>
              <MoreShapes>
                <svg width="11" height="11" viewBox="0 0 11 11"><path d="M5.500.5v10M.5 5.500h10" stroke="#fff" strokeWidth="1.700" /></svg>
                More Shapes
              </MoreShapes>
            </SideFooter>
          </Sidebar>

          <Center>
            <Canvas>
              <Paper />
              <Lines width="571" height="401" viewBox="0 0 571 401">
                <rect x=".5" y=".5" width="570" height="400" fill="#fff" stroke="#000" />
                <path d="M50.500 0v401M0 50.500h571" stroke="#000" />
                <path d="M0 90h571M0 180h571M0 220h571M0 320h571" stroke="#000" strokeWidth="4" />
                <path d="M205 5v390M259 5v390" stroke="#000" strokeWidth="2" />
              </Lines>
              {LABELS.map(([x, y, t]) => <Label key={`${x}-${y}`} $x={x} $y={y}>{t}</Label>)}
              <Thumb $x={200} $y={449} $w={232} $h={4} />
              <Thumb $x={902} $y={122} $w={4} $h={93} />
            </Canvas>
            <PageTabs>
              <PageMenu><Dots c="#6b6e70" r={2.1} step={6} /></PageMenu>
              <PageTab>
                Page-1
                <svg width="8" height="5" viewBox="0 0 8 5"><path d="M1 4.200l3-3 3 3" stroke="#666" strokeWidth="1.400" fill="none" /></svg>
              </PageTab>
              <AddPage><svg width="14" height="14" viewBox="0 0 14 14"><path d="M7 0v14M0 7h14" stroke="#707274" strokeWidth="1.800" /></svg></AddPage>
            </PageTabs>
          </Center>

          <Panel>
            <PanelTabs>
              <PanelTab $w={106}>Diagram</PanelTab>
              <PanelTab $w={107} $off>Style</PanelTab>
              <PanelTab $w={27} $off><Close s={10} c="#aebccd" sw={2.2} /></PanelTab>
            </PanelTabs>
            <Section $h={166} $pt={14}>
              <Heading>View</Heading>
              <Gap $h={5} $w={1} />
              <Row $h={24}>
                <Option $w={100}><input type="checkbox" defaultChecked /><span>Grid</span></Option>
                <NumberBox>10 pt</NumberBox>
                <Stepper><svg width="8" height="17" viewBox="0 0 8 17"><path d="M.5 5.500h7L4 2zM.5 11.500h7L4 15z" fill="#e8e8e8" stroke="#555" strokeWidth=".8" /><path d="M-2 8.500h12" stroke="#ccc" /></svg></Stepper>
                <ColorBtn>
                  <Swatch />
                  <svg width="12" height="12" viewBox="0 0 12 12" fill="none" stroke="#444" strokeWidth="1"><path d="M6.500 3.500L1.500 8.500.8 11.200l2.700-.7 5-5" /><path d="M6 2.500l3.500 3.500" /><path d="M8 3.500l1.500-2 1.500 1-.2 1.300L9 5z" fill="#444" /></svg>
                </ColorBtn>
              </Row>
              <Row $h={22}><Option><input type="checkbox" defaultChecked /><span>Page View</span></Option></Row>
              <Row $h={25}>
                <Option $w={100} $pl={19}><span>Background</span></Option>
                <PanelButton $h={22} $w={110}>Change...</PanelButton>
              </Row>
              <Row $h={25}><Option><input type="checkbox" /><span>Background Color</span></Option></Row>
              <Row $h={22}>
                <Option $w={104}><input type="checkbox" /><span>Shadow</span></Option>
                <Option><input type="checkbox" /><span>Sketch</span></Option>
              </Row>
            </Section>
            <Section $h={115} $pt={11}>
              <Heading>Options</Heading>
              <Gap $h={4} $w={1} />
              {['Connection Arrows', 'Connection Points', 'Guides'].map(t => (
                <Row key={t}><Option><input type="checkbox" defaultChecked /><span>{t}</span></Option></Row>
              ))}
            </Section>
            <Section $h={97} $pt={11}>
              <Heading>Paper Size</Heading>
              <PaperSelect><option>A4 (210 mm x 297 mm)</option></PaperSelect>
              <Gap $h={5} $w={1} />
              <Row $h={26}>
                <Option $w={77} $pl={9}><input type="radio" name="o" defaultChecked /><span>Portrait</span></Option>
                <Option $gap={7}><input type="radio" name="o" /><span>Landscape</span></Option>
              </Row>
            </Section>
            <Section $h={65} $pt={12}>
              <PanelButton $h={20} $w={210}>Edit Data...</PanelButton>
              <PanelButton $h={20} $w={210}>Clear Default Style</PanelButton>
            </Section>
          </Panel>
        </Main>

        <Downloads>
          <svg width="13" height="17" viewBox="0 0 13 17"><path d="M.5.5h8.500l3.500 3.500v12.500H.5z" fill="#f5f5f5" stroke="#8f8f8f" /><path d="M8.500.5V4.500h4" stroke="#9a9a9a" fill="#fff" /></svg>
          <FileName>tugas2-DFD.drawio</FileName>
          <svg width="11" height="7" viewBox="0 0 11 7"><path d="M1 5.800L5.500 1.300 10 5.800" stroke="#5f6368" strokeWidth="1.700" fill="none" /></svg>
          <DownloadDivider />
          <ShowAll>Show all</ShowAll>
          <Close s={12} c="#5f6368" sw={1.7} />
        </Downloads>
      </WindowBody>

      <Taskbar>
        <BehindText>
          <svg width="7" height="11" viewBox="0 0 7 11"><path d="M1 1l4.500 4.500L1 10" stroke="#a49081" strokeWidth="1.200" fill="none" /></svg>
          <span>&nbsp;TIMELINE</span>
        </BehindText>
        <TaskItem $ml={0} $w={50}><svg width="28" height="27" viewBox="0 0 28 27" fill="#fff"><path d="M.5 4.500L12 3v10H.5zM13 2.800L27.500 .5V13H13zM.5 14H12v10L.5 22.500zM13 14h14.500v12.500L13 24.300z" /></svg></TaskItem>
        <TaskItem $ml={0} $w={62}>
          <svg width="32" height="32" viewBox="0 0 32 32" fill="none">
            <path d="M25.500 21.500A10 10 0 1 1 26.300 17H9" stroke="#2b9ade" strokeWidth="5.500" />
            <path d="M24 22A9.500 9.500 0 0 1 9 21M8 12a9 9 0 0 1 16-.5M9 16h16" stroke="#8edaf9" strokeWidth="1.800" />
            <path d="M5 30C-2 29 6 14 17 7c9-6 15-6.500 12.500 1" stroke="#f3bb22" strokeWidth="2.600" />
          </svg>
        </TaskItem>
        <TaskItem $ml={2} $w={58} $open>
          <svg width="34" height="30" viewBox="0 0 34 30">
            <path d="M2 3h10l2 3h15v5H2z" fill="#e4c765" /><rect x="5" y="2" width="5" height="3" fill="#27a843" /><rect x="13" y="4" width="5" height="3" fill="#d94b3d" /><rect x="22" y="5" width="5" height="3" fill="#3c8ddd" />
            <path d="M3 6h28l2 2v18H3z" fill="#f4dc85" /><path d="M1 9h28l2 2v16H1z" fill="#f9e9a9" /><path d="M1 9h4v18H1z" fill="#e9cf78" />
            <path d="M7 29v-8a3 3 0 0 1 3-3h18a3 3 0 0 1 3 3v8h-5v-6H12v6z" fill="#8fc6e8" stroke="#d3ecf8" />
          </svg>
        </TaskItem>
        <TaskItem $ml={18} $w={30}>
          <svg width="30" height="30" viewBox="0 0 30 30"><rect width="30" height="30" fill="#008a00" /><path d="M8.500 9.500c0-6 3-7 4.500-3.500M11 9.500c0-8 6-8 6.500 0" stroke="#fff" strokeWidth="1.300" fill="none" /><path d="M4 10l21-1.500v17.500L5.500 24z" fill="#fff" /><path d="M9 13.500l4.300-.5v4H9zM14.500 12.800l5.500-.6v4.800h-5.500zM9 18h4.300v4L9 21.500zM14.500 18H20v4.800l-5.500-.7z" fill="#008a00" /></svg>
        </TaskItem>
        <TaskItem $ml={18} $w={58} $open>
          <svg width="30" height="30" viewBox="0 0 30 30"><circle cx="15" cy="15" r="15" fill="#1ed760" /><path d="M5.500 9.500c6-1.900 13-1.400 19 1.800M6.500 14.800c5.500-1.600 11-1 16 1.700M7.500 19.500c4.500-1.200 9-.8 13 1.500" stroke="#10251a" strokeWidth="2.500" strokeLinecap="round" fill="none" /></svg>
        </TaskItem>
        <TaskItem $ml={4} $w={58} $open $current>
          <svg width="32" height="32" viewBox="0 0 32 32">
            <circle cx="16" cy="16" r="16" fill="#fff" />
            <path d="M16 16L2.140 8A16 16 0 0 1 29.860 8z" fill="#e33b2e" />
            <path d="M16 8h13.860A16 16 0 0 1 16 32l6.930-12z" fill="#fcc31e" />
            <path d="M9.070 20L2.140 8A16 16 0 0 0 16 32l6.930-12z" fill="#2da94f" />
            <circle cx="16" cy="16" r="8" fill="#fff" /><circle cx="16" cy="16" r="6.300" fill="#1f78ee" />
          </svg>
        </TaskItem>
        <TaskItem $ml={4} $w={58} $open>
          <svg width="32" height="32" viewBox="0 0 32 32">
            <path d="M16 0l5.500 5.500-3 3 2.500 2.500-5 5-7.500-7.500z" fill="#f77a7a" /><path d="M8 8.500l8 7.500-8 7.500L0 16z" fill="#80b3ff" />
            <path d="M24 8.500l8 7.500-8 7.500-8-7.500z" fill="#8dd35f" /><path d="M16 16l8 8-8 8-8-8z" fill="#ffe680" />
            <path d="M11 2l5 6v13M16 10l6 6" stroke="#6e5547" strokeWidth="2" fill="none" /><circle cx="16" cy="22" r="2.200" fill="#6e5547" /><circle cx="23" cy="16" r="2.200" fill="#6e5547" />
          </svg>
        </TaskItem>
        <TaskItem $ml={4} $w={59} $open>
          <svg width="33" height="32" viewBox="0 0 33 32"><path d="M1.500 21.500l3 2.500L25 7.500V1z" fill="#0a74ba" /><path d="M1.500 10.500l3-2.500L25 24.500V31z" fill="#0f8ad4" /><path d="M24 .7l7.500 3.300v24L24 31.300z" fill="#2aa8f2" /></svg>
        </TaskItem>
        <Tray>
          <svg width="8" height="6" viewBox="0 0 8 6"><path d="M4 .5l4 4.500H0z" fill="#fff" /></svg>
          <Gap $w={13} />
          <svg width="18" height="16" viewBox="0 0 18 16"><path d="M2 .5v15" stroke="#fff" strokeWidth="1.500" /><path d="M3 1.500c4-1 5 1.500 9.500.5V9C8.500 10 7 7.500 3 8.500z" fill="#fff" /><circle cx="11.500" cy="11" r="4.700" fill="#d8302c" /><path d="M9.800 9.300l3.400 3.400M13.200 9.300l-3.400 3.400" stroke="#fff" strokeWidth="1.300" /></svg>
          <Gap $w={11} />
          <svg width="10" height="16" viewBox="0 0 10 16"><path d="M3 1.500h4v1.500h1.500v12h-7V3H3z" fill="#443329" stroke="#fff" strokeWidth="1.300" /><rect x="3.300" y="5" width="3.400" height="8" fill="#fff" /></svg>
          <Gap $w={8} />
          <svg width="16" height="12" viewBox="0 0 16 12" fill="#fff"><rect y="9" width="2.300" height="3" /><rect x="3.300" y="7" width="2.300" height="5" /><rect x="6.600" y="5" width="2.300" height="7" /><rect x="9.900" y="2.500" width="2.300" height="9.500" /><rect x="13.200" width="2.300" height="12" fill="#a09389" /></svg>
          <Gap $w={8} />
          <svg width="15" height="14" viewBox="0 0 15 14"><path d="M0 4.500h3L7 .5v13L3 9.500H0z" fill="#fff" /><path d="M9 4.500q1.500 2.500 0 5M11 2.800q2.700 4.200 0 8.400M12.800 1q3 6 0 12" stroke="#e8dfd9" fill="none" /></svg>
          <Clock>16:21<br />13/02/2023</Clock>
        </Tray>
      </Taskbar>
    </Screen>
  );
}
